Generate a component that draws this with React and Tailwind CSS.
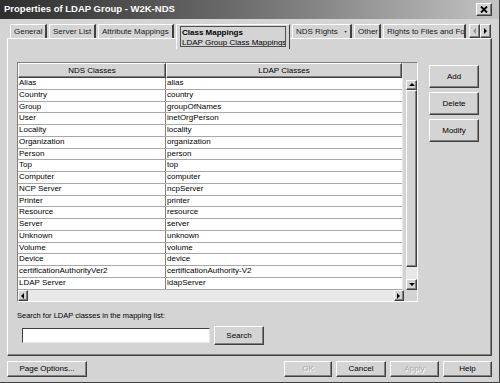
import React from 'react'

const ROWS = [
  ['Alias', 'alias'],
  ['Country', 'country'],
  ['Group', 'groupOfNames'],
  ['User', 'inetOrgPerson'],
  ['Locality', 'locality'],
  ['Organization', 'organization'],
  ['Person', 'person'],
  ['Top', 'top'],
  ['Computer', 'computer'],
  ['NCP Server', 'ncpServer'],
  ['Printer', 'printer'],
  ['Resource', 'resource'],
  ['Server', 'server'],
  ['Unknown', 'unknown'],
  ['Volume', 'volume'],
  ['Device', 'device'],
  ['certificationAuthorityVer2', 'certificationAuthority-V2'],
  ['LDAP Server', 'ldapServer'],
]

const raised =
  'border border-t-white border-l-white border-r-[#404040] border-b-[#404040] shadow-[inset_-1px_-1px_#808080] bg-[#d4d4d4]'

function Arrow({ dir, gray }) {
  const pts = {
    up: '1,5 4,2 7,5',
    down: '1,2 4,5 7,2',
    left: '5,1 2,4 5,7',
    right: '2,1 5,4 2,7',
  }[dir]
  return (
    <svg width="8" height="8" viewBox="0 0 8 8">
      <polygon points={pts} fill={gray ? '#909090' : '#000'} />
    </svg>
  )
}

function Btn({ children, className = '', disabled }) {
  return (
    <div
      className={`${raised} flex items-center justify-center ${
        disabled ? 'text-[#a8a8a8] [text-shadow:1px_1px_#fff]' : 'text-black'
      } ${className}`}
    >
      {children}
    </div>
  )
}

function Tab({ children, w }) {
  return (
    <div
      className={`h-[14px] ${w} shrink-0 border-t border-l border-t-white border-l-white border-r-2 border-r-[#404040] flex items-center px-[3px] whitespace-nowrap overflow-hidden text-[#202020]`}
    >
      {children}
    </div>
  )
}

export default function App() {
  return (
    <div className="w-[500px] h-[383px] bg-[#d4d4d4] font-['Liberation_Sans',Arial,sans-serif] text-[8px] text-black flex flex-col overflow-hidden border-r border-b border-[#404040]">
      {/* title bar */}
      <div className="h-[19px] shrink-0 bg-gradient-to-r from-[#2e2e2e] via-[#707070] to-[#c4c4c4] flex items-center pl-[4px] pr-[7px]">
        <span className="text-white font-bold text-[9.5px]">Properties of LDAP Group - W2K-NDS</span>
        <div className={`${raised} ml-auto w-[16px] h-[13px] flex items-center justify-center`}>
          <svg width="8" height="7" viewBox="0 0 8 7">
            <path d="M1 0.5 L7 6.5 M7 0.5 L1 6.5" stroke="#000" strokeWidth="1.8" />
          </svg>
        </div>
      </div>

      {/* tabs */}
      <div className="mt-[5px] h-[14px] shrink-0 flex items-start pl-[10px] gap-[2px]">
        <Tab w="w-[37px]">General</Tab>
        <Tab w="w-[47px]">Server List</Tab>
        <Tab w="w-[76px]">Attribute Mappings</Tab>
        <div className="relative z-10 w-[114px] h-[25px] shrink-0 bg-[#d4d4d4] border-t border-l border-t-white border-l-white border-r border-r-[#404040] pt-[1px] px-[3px]">
          <div className="border border-[#505050] h-[21px] px-[1px] flex flex-col leading-[9px] whitespace-nowrap overflow-hidden">
            <span className="font-bold mt-[1px]">Class Mappings</span>
            <span className="mt-[1px]">LDAP Group Class Mappings</span>
          </div>
        </div>
        <Tab w="w-[60px]">
          <span>NDS Rights</span>
          <svg width="8" height="6" viewBox="0 0 8 6" className="ml-[6px]">
            <polygon points="1,1 7,1 4,5" fill="#000" />
          </svg>
        </Tab>
        <Tab w="w-[27px]">Other</Tab>
        <Tab w="w-[83px]">Rights to Files and Folders</Tab>
        <div className="ml-[1px] flex h-[14px]">
          <div className={`${raised} w-[11px] h-[14px] flex items-center justify-center`}>
            <Arrow dir="left" gray />
          </div>
          <div className={`${raised} w-[11px] h-[14px] flex items-center justify-center`}>
            <Arrow dir="right" />
          </div>
        </div>
      </div>

      {/* panel */}
      <div className="mx-[7px] h-[318px] shrink-0 border border-t-white border-l-white border-r-[#404040] border-b-[#404040] shadow-[inset_-1px_-1px_#808080] pl-[9px] pt-[23px]">
        <div className="flex items-start">
          {/* table */}
          <div className="w-[401px] h-[240px] border border-t-[#808080] border-l-[#808080] border-r-white border-b-white flex flex-col">
            <div className="flex flex-1 min-h-0">
              <div className="flex-1 min-w-0 flex flex-col bg-white overflow-hidden">
                <div className="flex h-[15px] shrink-0 bg-[#d4d4d4]">
                  <div className={`${raised} w-[148px] text-center leading-[13px]`}>NDS Classes</div>
                  <div className={`${raised} flex-1 text-center leading-[13px]`}>LDAP Classes</div>
                </div>
                {ROWS.map(([a, b]) => (
                  <div key={a} className="flex h-[11.75px] shrink-0 border-b border-[#a8a8a8] leading-[10px]">
                    <div className="w-[148px] border-r border-[#808080] pl-[1px] whitespace-nowrap overflow-hidden">{a}</div>
                    <div className="flex-1 pl-[1px] whitespace-nowrap overflow-hidden">{b}</div>
                  </div>
                ))}
              </div>
              {/* vertical scrollbar */}
              <div className="w-[15px] shrink-0 bg-[#d4d4d4] flex flex-col pl-[3px] border-l border-[#e8e8e8]">
                <div className="h-[17px] shrink-0" />
                <div className={`${raised} h-[10px] shrink-0 flex items-center justify-center`}>
                  <Arrow dir="up" />
                </div>
                <div className={`${raised} flex-1`} />
                <div className="h-[12px] shrink-0 bg-[#e8e8e8]" />
                <div className={`${raised} h-[11px] shrink-0 flex items-center justify-center`}>
                  <Arrow dir="down" />
                </div>
              </div>
            </div>
            {/* horizontal scrollbar */}
            <div className="h-[11px] shrink-0 flex">
              <div className="flex-1 flex bg-[#e8e8e8]">
                <div className={`${raised} w-[10px] flex items-center justify-center`}>
                  <Arrow dir="left" />
                </div>
                <div className="flex-1" />
                <div className={`${raised} w-[10px] flex items-center justify-center`}>
                  <Arrow dir="right" />
                </div>
              </div>
              <div className="w-[13px] bg-[#d4d4d4]" />
            </div>
          </div>

          {/* side buttons */}
          <div className="ml-[11px] mt-[3px] flex flex-col gap-[4px]">
            <Btn className="w-[50px] h-[23px]">Add</Btn>
            <Btn className="w-[50px] h-[23px]">Delete</Btn>
            <Btn className="w-[50px] h-[23px]">Modify</Btn>
          </div>
        </div>

        <div className="mt-[8px] leading-[12px] text-[7.5px]">Search for LDAP classes in the mapping list:</div>
        <div className="mt-[4px] flex items-center">
          <div className="ml-[5px] w-[188px] h-[15px] bg-white border border-t-[#404040] border-l-[#404040] border-r-[#e8e8e8] border-b-[#e8e8e8]" />
          <Btn className="ml-[4px] w-[50px] h-[19px]">Search</Btn>
        </div>
      </div>

      {/* bottom buttons */}
      <div className="mt-[5px] h-[16px] shrink-0 flex px-[7px]">
        <Btn className="w-[80px]">Page Options...</Btn>
        <div className="ml-auto flex gap-[4px]">
          <Btn className="w-[48px]" disabled>OK</Btn>
          <Btn className="w-[50px]">Cancel</Btn>
          <Btn className="w-[49px]" disabled>Apply</Btn>
          <Btn className="w-[49px]">Help</Btn>
        </div>
      </div>
    </div>
  )
}
